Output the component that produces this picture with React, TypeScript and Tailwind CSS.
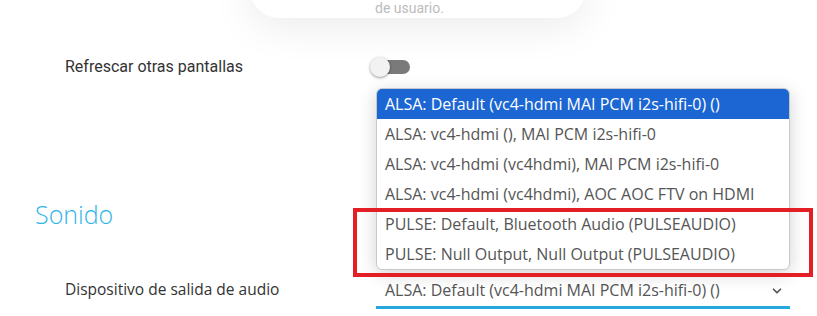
import { ChevronDown } from 'lucide-react';

const options = [
  'ALSA: Default (vc4-hdmi MAI PCM i2s-hifi-0) ()',
  'ALSA: vc4-hdmi (), MAI PCM i2s-hifi-0',
  'ALSA: vc4-hdmi (vc4hdmi), MAI PCM i2s-hifi-0',
  'ALSA: vc4-hdmi (vc4hdmi), AOC AOC FTV on HDMI',
  'PULSE: Default, Bluetooth Audio (PULSEAUDIO)',
  'PULSE: Null Output, Null Output (PULSEAUDIO)',
];

export default function App() {
  return (
    <main
      className="relative w-[817px] h-[316px] overflow-hidden bg-white text-[#333]"
      style={{ fontFamily: '"Open Sans", "Noto Sans", sans-serif' }}
    >
      {/* Card above, mostly scrolled off */}
      <div className="ml-[250px] w-[336px] -mt-[40px] h-[58px] rounded-[40px] bg-white shadow-[0_6px_44px_rgba(0,0,0,0.09)] flex items-end pb-[3px] pl-[125px]">
        <span className="text-[14px] text-[#bcbcbc] leading-none" style={{ fontFamily: 'Roboto, sans-serif' }}>
          de usuario.
        </span>
      </div>

      {/* Refrescar otras pantallas */}
      <div className="flex items-center mt-[39px] h-[20px]">
        <span className="pl-[65px] w-[370px] text-[16px] leading-none" style={{ fontFamily: 'Roboto, sans-serif' }}>
          Refrescar otras pantallas
        </span>
        <div className="relative w-[40px] h-[20px] flex items-center">
          <div className="absolute left-[6px] w-[34px] h-[14px] rounded-full bg-[#7a7a7a]" />
          <div className="relative w-[20px] h-[20px] rounded-full bg-[#f2f2f2] shadow-[0_1px_3px_rgba(0,0,0,0.4)]" />
        </div>
      </div>

      {/* Sonido */}
      <h2 className="pl-[35px] mt-[125px] text-[25px] font-light leading-none text-[#2eb5ea]">Sonido</h2>

      {/* Dispositivo de salida */}
      <div className="flex items-start mt-[55px]">
        <span className="pl-[65px] w-[376px] text-[15.5px] leading-none">Dispositivo de salida de audio</span>
        <div className="w-[414px] h-[27px] border-b-[3px] border-[#27a9e0] flex items-start justify-between pl-[9px] pr-[6px]">
          <span className="text-[16px] leading-none text-[#555]">{options[0]}</span>
          <ChevronDown className="w-[14px] h-[14px] text-[#555] mt-[2px]" strokeWidth={3} />
        </div>
      </div>

      {/* Open dropdown list */}
      <ul className="absolute left-[376px] top-[88px] w-[414px] bg-white border border-[#c8c8c8] rounded-[6px] overflow-hidden shadow-[0_4px_18px_rgba(0,0,0,0.18)]">
        {options.map((o, i) => (
          <li
            key={o}
            className={
              i === 0
                ? 'h-[30px] flex items-center pl-[8px] text-[16px] bg-[#1b66d3] text-white'
                : 'h-[30px] flex items-center pl-[8px] text-[16px] text-[#555]'
            }
          >
            {o}
          </li>
        ))}
      </ul>

      {/* Red highlight box */}
      <div className="absolute left-[353px] top-[208px] w-[460px] h-[69px] border-[4px] border-[#e31e24]" />
    </main>
  );
}
